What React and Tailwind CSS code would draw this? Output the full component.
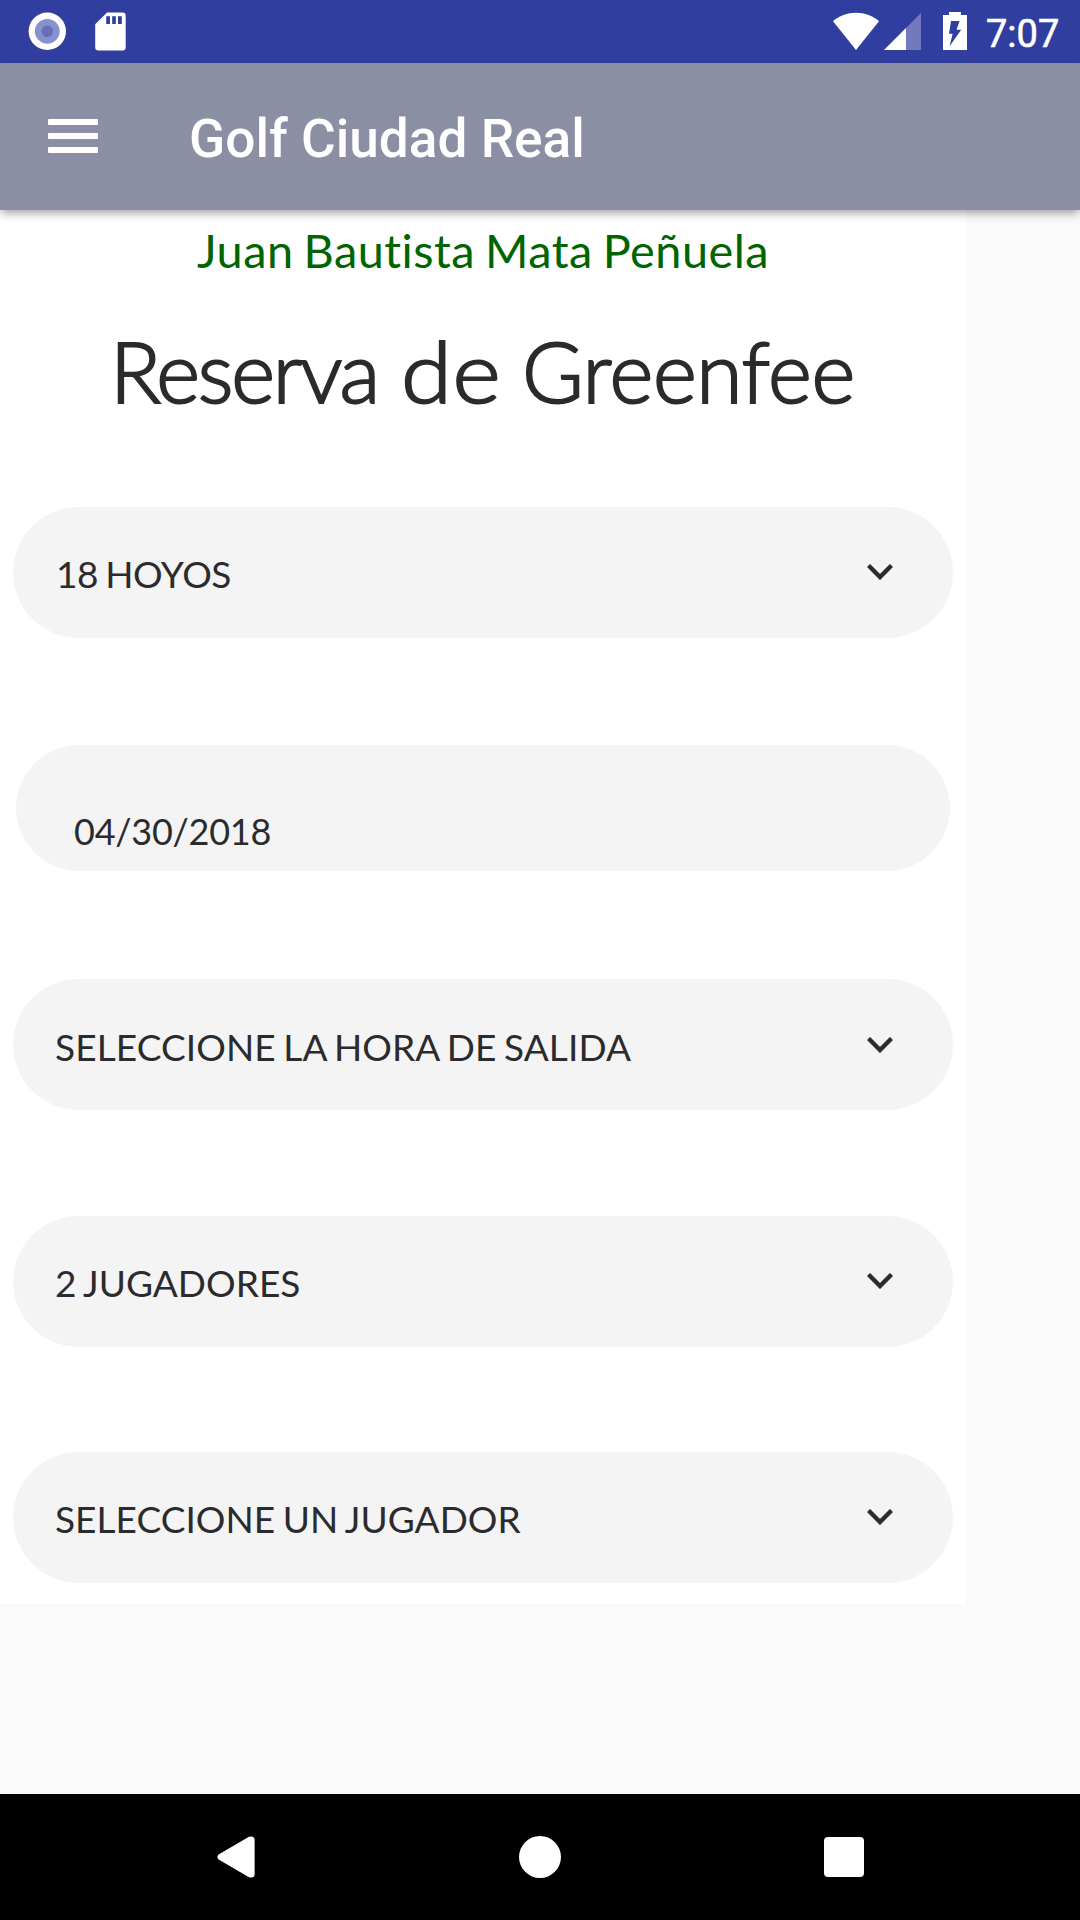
import React from "react";

function StatusBar() {
  return (
    <header className="flex h-[63px] items-start bg-[#303e9f] pl-[28px] pr-[20px] text-white">
      <svg className="mt-[12px] h-[38px] w-[38px]" viewBox="0 0 38 38">
        <circle cx="19.3" cy="19.3" r="18.7" fill="#fff" />
        <circle cx="19.3" cy="19.3" r="12.4" fill="#8990cd" />
        <circle cx="19.3" cy="19.3" r="5.8" fill="#656eb7" />
      </svg>
      <svg className="ml-[29px] mt-[12px] h-[39px] w-[31px]" viewBox="0 0 31 39">
        <path d="M12 .5H27.5Q30.7.5 30.7 3.7V35.3Q30.7 38.5 27.5 38.5H3.4Q.2 38.5.2 35.3V12.2Z" fill="#fff" />
        <path d="M11.2 4.2h3.8v7.8h-3.8zM17.2 4.2h3.6v7.8h-3.6zM23 4.2h3.8v7.8H23z" fill="#303e9f" />
      </svg>
      <svg className="ml-auto mt-[12px] h-[38px] w-[46px]" viewBox="0 0 46 38">
        <path d="M23 38 0 9.2C6 4 14 .8 23 .8S40 4 46 9.2Z" fill="#fff" />
      </svg>
      <svg className="ml-[5px] mt-[12px] h-[38px] w-[37px]" viewBox="0 0 37 38">
        <path d="M0 38H37V1Z" fill="#7279bd" />
        <path d="M0 38H22V16Z" fill="#fff" />
      </svg>
      <svg className="ml-[22px] mt-[12px] h-[38px] w-[24px]" viewBox="0 0 24 38">
        <path d="M6 0H18V3H24V38H0V3H6Z" fill="#fff" />
        <path d="M8 9H16.5L13.6 17.8H18.2L6.6 34.2 9.6 21.8H6Z" fill="#303e9f" />
      </svg>
      <span className="ml-[19px] mt-[11px] w-[74px] whitespace-nowrap font-['Roboto',sans-serif] text-[38px] leading-[46px] [-webkit-text-stroke:0.6px_#fff]">7:07</span>
    </header>
  );
}

function AppBar() {
  return (
    <div className="relative z-10 flex h-[147px] items-center bg-[#8b8fa4] pl-[48px] shadow-[0_4px_9px_-1px_rgba(0,0,0,0.38)]">
      <button aria-label="Menú" className="mt-[-2px] flex w-[50px] flex-col gap-[8px]">
        <span className="h-[6px] rounded-[1px] bg-white" />
        <span className="h-[6px] rounded-[1px] bg-white" />
        <span className="h-[6px] rounded-[1px] bg-white" />
      </button>
      <h1 className="ml-[91px] mt-[5px] whitespace-nowrap font-['Roboto',sans-serif] text-[53.2px] font-medium leading-[64px] text-white">
        Golf Ciudad Real
      </h1>
    </div>
  );
}

function Chevron() {
  return (
    <svg className="mt-[-2px] h-4 w-[26px]" viewBox="0 0 26 16" fill="none" stroke="#2b2b2d" strokeWidth="4.4">
      <path d="M1.5 1.5 13 13 24.5 1.5" />
    </svg>
  );
}

function Select({ label, className }) {
  return (
    <button
      className={
        "mx-[13px] flex h-[131px] w-[940px] items-center justify-between rounded-full bg-[#f4f4f4] pr-[60px] text-left text-[37px] text-[#2b2b2d] [word-spacing:-2px] " +
        className
      }
    >
      <span className="mt-[3px] whitespace-nowrap">{label}</span>
      <Chevron />
    </button>
  );
}

export default function App() {
  return (
    <div className="flex h-[1920px] w-[1080px] flex-col overflow-hidden bg-[#fafafa] font-['Lato',sans-serif]">
      <StatusBar />
      <AppBar />
      <main className="h-[1394px] w-[966px] bg-white">
        <p className="h-[72px] pt-[10px] text-center text-[46.8px] leading-[60px] tracking-[0.5px] text-[#006400] [word-spacing:-2.5px]">
          Juan Bautista Mata Peñuela
        </p>
        <h2 className="flex h-[100px] pl-[110px] pt-[39px] text-[84px] font-light leading-[100px] text-[#2b2b2d] [-webkit-text-stroke:2px_#2b2b2d]">
          <span className="w-[291px] tracking-[-2.2px]">Reserva&nbsp;</span>
          <span className="w-[121px] origin-left scale-x-[1.1] tracking-[0.5px]">de</span>
          <span className="tracking-[-0.4px]">Greenfee</span>
        </h2>
        <Select label="18 HOYOS" className="mt-[125px] pl-[43px] tracking-[-0.4px]" />
        <div className="ml-[16px] mt-[107px] flex h-[126px] w-[934px] items-center rounded-full bg-[#f4f4f4] pl-[58px] text-[36px] text-[#2b2b2d]">
          <span className="mt-[45px] leading-[44px] tracking-[-0.25px]">04/30/2018</span>
        </div>
        <Select label="SELECCIONE LA HORA DE SALIDA" className="mt-[108px] pl-[42px] pt-[2px] tracking-[0.1px]" />
        <Select label="2 JUGADORES" className="mt-[106px] pl-[42px] tracking-[0.05px]" />
        <Select label="SELECCIONE UN JUGADOR" className="mt-[105px] pl-[42px] tracking-[0.05px]" />
      </main>
      <nav className="mt-auto flex h-[126px] items-center bg-black pl-[217px]">
        <svg className="h-[42px] w-[38px]" viewBox="0 0 38 42" fill="#fff">
          <path d="M1.6 18.6 32 .8Q37.6-.8 37.6 4V38Q37.6 42.8 32 41.2L1.6 23.4Q-.8 21 1.6 18.6Z" />
        </svg>
        <span className="ml-[264px] size-[42px] rounded-full bg-white" />
        <span className="ml-[263px] size-[40px] rounded-[4px] bg-white" />
      </nav>
    </div>
  );
}
